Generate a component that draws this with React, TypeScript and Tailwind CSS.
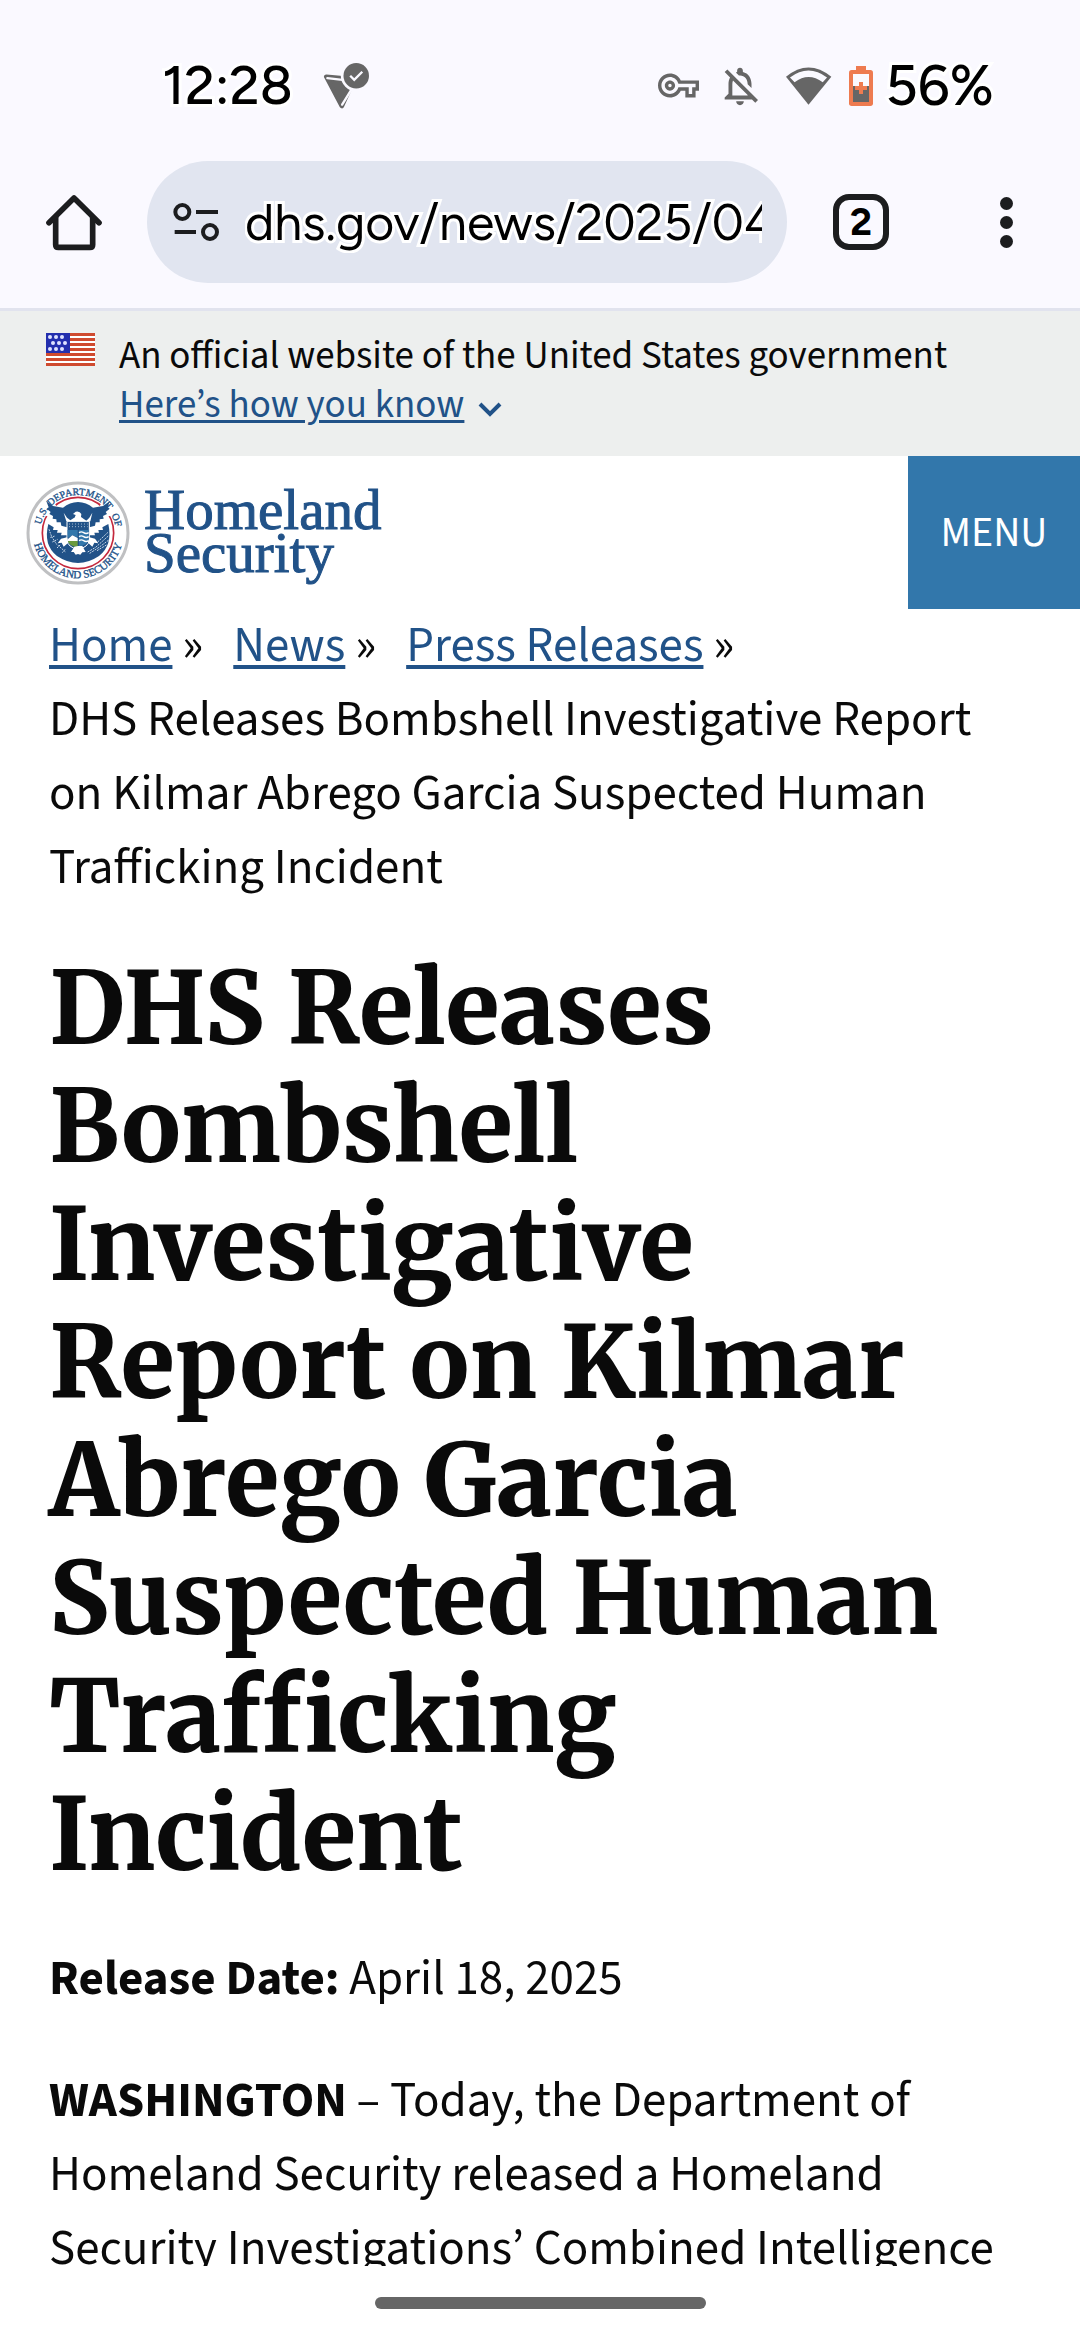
import type { ReactNode } from "react";
import { MdOutlineNotificationsOff, MdOutlineVpnKey } from "react-icons/md";

const halo = "[paint-order:stroke_fill] [-webkit-text-stroke:6px_white]";

function SendDoneIcon() {
  return (
    <svg viewBox="550 66 140 140" className="size-[47px]" aria-hidden="true">
      <path d="M560 110 L642 118 L606 197 Z" fill="#666" stroke="#666" strokeWidth="14" strokeLinejoin="round" />
      <path d="M563 114 L614 120 M607 193 L636 146" stroke="#faf9ff" strokeWidth="7" strokeLinecap="round" />
      <circle cx="649" cy="107" r="46" fill="#faf9ff" />
      <circle cx="649" cy="107" r="38" fill="#666" />
      <path d="M631 107 L643 119 L667 95" fill="none" stroke="#faf9ff" strokeWidth="7" />
    </svg>
  );
}

function WifiIcon() {
  return (
    <svg viewBox="430 72 142 120" className="h-10 w-[47px]" aria-hidden="true">
      <path d="M433 104 Q501 48 570 104 L501 189 Z" fill="#666" />
      <path d="M445 106 Q501 64 557 106 L544 121 Q501 88 459 121 Z" fill="#faf9ff" />
    </svg>
  );
}

function BatteryIcon() {
  return (
    <svg viewBox="624 75 72 120" className="h-10 w-6" aria-hidden="true">
      <rect x="645" y="75" width="30" height="20" fill="#ee7b50" />
      <rect x="624" y="87" width="72" height="108" rx="8" fill="#ee7b50" />
      <rect x="636" y="99" width="48" height="36" fill="#faf9ff" />
      <rect x="636" y="135" width="48" height="48" fill="#666" />
      <path d="M660 123 V159 M642 141 H678" stroke="#ee7b50" strokeWidth="12" />
    </svg>
  );
}

function HomeIcon() {
  return (
    <svg viewBox="75 128 174 174" className="size-[58px]" fill="none" stroke="#1c1d1f" strokeWidth="17" aria-hidden="true">
      <path d="M87 217 L162 143 L237 217" strokeLinecap="round" strokeLinejoin="round" />
      <path d="M107 200 V283 Q107 291 115 291 H210 Q218 291 218 283 V200" />
    </svg>
  );
}

function SiteSettingsIcon() {
  return (
    <svg viewBox="459 156 138 120" className="h-10 w-[46px] shrink-0" fill="none" stroke="#1c1d1f" strokeWidth="12" aria-hidden="true">
      <circle cx="487" cy="186" r="21" />
      <path d="M528 186 H594 M464 246 H528" />
      <circle cx="570" cy="246" r="21" />
    </svg>
  );
}

function Flag() {
  return (
    <svg viewBox="0 0 49 33" className="mt-[22px] h-[33px] w-[49px] shrink-0" role="img" aria-label="U.S. flag">
      <rect width="49" height="33" fill="#fff" />
      {[0, 5, 10, 15, 20, 25, 30].map((y) => (
        <rect key={y} y={y} width="49" height="3" fill="#cf4a2f" />
      ))}
      <rect width="24" height="20" fill="#232fae" />
      {[
        [4, 4], [10, 4], [16, 4],
        [7, 10], [13, 10], [19, 10],
        [4, 16], [10, 16], [16, 16],
      ].map(([x, y]) => (
        <circle key={`${x}-${y}`} cx={x} cy={y} r="2" fill="#dfe3ff" />
      ))}
    </svg>
  );
}

function Seal() {
  const blue = "#215288";
  return (
    <svg viewBox="77 93 312 312" className="size-[104px] shrink-0" aria-hidden="true">
      <defs>
        <path id="sealTop" d="M119 249 A114 114 0 0 1 347 249" />
        <path id="sealBottom" d="M97 249 A136 136 0 0 0 369 249" />
      </defs>
      <circle cx="233" cy="249" r="150" fill="#fff" stroke="#bfc0c2" strokeWidth="9" />
      <circle cx="233" cy="249" r="107" fill="#fff" stroke="#c4283c" strokeWidth="5" />
      <path d="M136 154 L154 148 L168 168 L150 200 L126 196 Z M330 154 L312 148 L298 168 L316 200 L340 196 Z" fill="#fff" />
      <g fill={blue} stroke={blue} strokeWidth="1" fontSize="33" className="font-['Liberation_Serif',serif]">
        <text fontSize="30">
          <textPath href="#sealTop" startOffset="7%">U.S.</textPath>
        </text>
        <text textAnchor="middle" fontSize="30">
          <textPath href="#sealTop" startOffset="52%">DEPARTMENT</textPath>
        </text>
        <text textAnchor="end" fontSize="30">
          <textPath href="#sealTop" startOffset="95%">OF</textPath>
        </text>
        <text textAnchor="middle">
          <textPath href="#sealBottom" startOffset="50%">HOMELAND SECURITY</textPath>
        </text>
      </g>
      {/* lower field */}
      <path d="M144 222 L160 232 L158 240 L172 240 L170 248 L184 248 L182 256 L200 256 L200 236 H267 V256 L284 256 L282 248 L296 248 L294 240 L308 240 L306 232 L324 222 Q338 285 296 318 Q233 360 170 318 Q128 285 144 222 Z" fill={blue} />
      {/* wings and chest */}
      <path d="M138 154 L158 168 L188 173 Q208 157 233 156 Q258 157 278 173 L308 168 L328 154 L322 172 L328 176 L316 186 L320 192 L308 198 L310 206 L298 208 L298 217 L286 217 L284 227 L267 232 L267 214 H200 L200 232 L183 227 L181 217 L169 217 L168 208 L157 206 L158 198 L147 192 L151 186 L139 176 L145 172 Z" fill={blue} />
      {/* head and shoulders */}
      <path d="M218 192 L226 185 Q238 182 243 192 L242 201 L258 212 L267 203 L276 188 L270 214 H198 L190 188 L200 203 L210 211 L224 202 L224 194 Z" fill="#fff" />
      <path d="M218 197 L226 194 L225 199 Z" fill={blue} />
      {/* shield */}
      <path d="M200 214 H267 V270 Q264 292 233 298 Q202 292 200 270 Z" fill={blue} stroke="#fff" strokeWidth="3" />
      <path d="M206 222 H262 M206 230 H262" stroke="#dfe8f2" strokeWidth="2" strokeDasharray="3 6" />
      <path d="M202 240 H232 V262 L216 256 L202 264 Z" fill="#3277ab" />
      <path d="M236 240 H265 V270 Q262 284 236 290 Z" fill="#3277ab" />
      <path d="M236 248 q7 -5 14 0 t15 0 M236 260 q7 -5 14 0 t15 0 M236 272 q7 -5 14 0 t15 0" fill="none" stroke="#fff" strokeWidth="4" />
      <path d="M202 268 L216 256 L232 264 V274 H202 Z" fill="#fff" />
      <path d="M202 273 H232 V292 Q206 288 202 273 Z" fill="#6a9a3d" />
      {/* tail and legs */}
      <path d="M222 290 L233 288 L246 288 L256 306 L246 307 L240 314 L233 312 L226 314 L220 306 L212 306 Z" fill="#fff" />
      <path d="M200 262 L182 266 L172 280 L184 278 L190 290 L204 278 Z M267 262 L284 266 L294 280 L282 278 L276 290 L263 278 Z" fill="#fff" />
      {/* olive branch and arrows */}
      <path d="M146 238 L154 260 L168 282 L196 306 M150 262 L164 258 M156 276 L172 268 M170 294 L180 284 M186 308 L196 296" fill="none" stroke="#c9d8e8" strokeWidth="3" strokeDasharray="5 3" />
      <path d="M262 306 L286 292 L326 256 M268 310 L296 292 L328 268 M292 276 L324 246 M290 302 L320 284" fill="none" stroke="#c9d8e8" strokeWidth="3" strokeDasharray="6 3" />
    </svg>
  );
}

function Crumb({ children }: { children: ReactNode }) {
  return (
    <li className="mr-[30px]">
      <a href="#" className="text-[#215288] underline decoration-[4px] underline-offset-[4px]">
        {children}
      </a>{" "}
      »
    </li>
  );
}

export default function App() {
  return (
    <div className="flex h-dvh flex-col overflow-hidden bg-white font-['Source_Sans_3','Noto_Sans_CJK_SC',sans-serif] text-[#0a0a0a]">
      <div className="border-b-[3px] border-[#e1e3ee] bg-[#faf9ff] font-[Figtree,Lato,sans-serif] text-black">
        <div className="flex h-[161px] items-center pt-[10px] pr-[86px] pl-[162px] font-medium">
          <span className={`text-[54px] ${halo}`}>12:28</span>
          <span className="ml-[30px]">
            <SendDoneIcon />
          </span>
          <div className="ml-auto flex items-center">
            <MdOutlineVpnKey className="size-[41px] text-[#666]" />
            <MdOutlineNotificationsOff className="ml-[18px] size-[46px] text-[#666]" />
            <span className="ml-[22px]">
              <WifiIcon />
            </span>
            <span className="ml-[17px]">
              <BatteryIcon />
            </span>
            <span className={`ml-3 text-[56px] ${halo}`}>56%</span>
          </div>
        </div>
        <div className="flex items-center pr-[67px] pb-[25px] pl-[45px]">
          <button type="button" aria-label="Home">
            <HomeIcon />
          </button>
          <div className="ml-11 flex h-[122px] min-w-0 flex-1 items-center rounded-full bg-[#e1e5f0] pr-[25px] pl-[26px]">
            <button type="button" aria-label="Site information">
              <SiteSettingsIcon />
            </button>
            <input
              aria-label="Address"
              readOnly
              value="dhs.gov/news/2025/04"
              className={`ml-[26px] h-20 min-w-0 flex-1 bg-transparent text-[50px] outline-none ${halo}`}
            />
          </div>
          <button
            type="button"
            aria-label="2 open tabs"
            className="ml-[46px] flex size-14 items-center justify-center rounded-2xl border-[6px] border-[#1c1d1f] text-[38px] font-bold"
          >
            2
          </button>
          <button type="button" aria-label="More options" className="ml-[111px] flex flex-col gap-[6px]">
            <span className="size-[13px] rounded-full bg-[#1c1d1f]" />
            <span className="size-[13px] rounded-full bg-[#1c1d1f]" />
            <span className="size-[13px] rounded-full bg-[#1c1d1f]" />
          </button>
        </div>
      </div>

      <div className="flex bg-[#edefee] pl-[46px] text-[39px] leading-[49px]">
        <Flag />
        <div className="pt-[21px] pb-[26px] pl-6">
          <p>An official website of the United States government</p>
          <button type="button" className="flex items-center text-[#215288]">
            <span className="underline decoration-[3px] underline-offset-[3px]">Here’s how you know</span>
            <svg viewBox="0 0 24 16" className="mt-[6px] ml-[14px] h-4 w-6" fill="none" stroke="#215288" strokeWidth="4" aria-hidden="true">
              <path d="M2 3 L12 13 L22 3" />
            </svg>
          </button>
        </div>
      </div>

      <header className="flex h-[153px] shrink-0 items-stretch justify-between">
        <a href="#" className="flex items-center pl-[26px]">
          <Seal />
          <span className="ml-[14px] pb-1 font-['Liberation_Serif',serif] text-[57px] leading-[43px] text-[#215288] [-webkit-text-stroke:1px_#215288]">
            Homeland
            <br />
            Security
          </span>
        </a>
        <button type="button" className="w-[172px] bg-[#3277ab] pt-[2px] text-[42px] text-white">
          MENU
        </button>
      </header>

      <main className="min-h-0 flex-1 overflow-hidden px-[49px] text-[49px] leading-[74px]">
        <nav aria-label="Breadcrumb">
          <ol className="flex flex-wrap">
            <Crumb>Home</Crumb>
            <Crumb>News</Crumb>
            <Crumb>Press Releases</Crumb>
            <li className="mr-[30px]">
              DHS Releases Bombshell Investigative Report on Kilmar Abrego Garcia Suspected Human Trafficking Incident
            </li>
          </ol>
        </nav>
        <h1 className="mt-[45px] font-[Merriweather,'DejaVu_Serif_Condensed',serif] text-[99px] leading-[118px] font-extrabold">
          DHS Releases Bombshell Investigative Report on Kilmar Abrego Garcia Suspected Human Trafficking Incident
        </h1>
        <p className="mt-12">
          <strong className="font-bold">Release Date:</strong> <time dateTime="2025-04-18">April 18, 2025</time>
        </p>
        <p className="mt-12">
          <strong className="font-bold">WASHINGTON</strong> – Today, the Department of Homeland Security released a
          Homeland Security Investigations’ Combined Intelligence
        </p>
      </main>

      <footer className="flex h-[74px] shrink-0 justify-center pt-[31px]">
        <div className="h-3 w-[331px] rounded-full bg-[#666]" />
      </footer>
    </div>
  );
}
